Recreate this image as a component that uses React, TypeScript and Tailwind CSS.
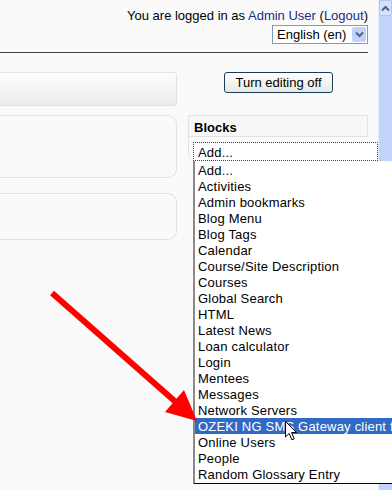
import React from "react";

const BLOCK_OPTIONS = [
  "Add...",
  "Activities",
  "Admin bookmarks",
  "Blog Menu",
  "Blog Tags",
  "Calendar",
  "Course/Site Description",
  "Courses",
  "Global Search",
  "HTML",
  "Latest News",
  "Loan calculator",
  "Login",
  "Mentees",
  "Messages",
  "Network Servers",
  "OZEKI NG SMS Gateway client for Moodle",
  "Online Users",
  "People",
  "Random Glossary Entry",
];

const SELECTED = "OZEKI NG SMS Gateway client for Moodle";

function ChevronDown() {
  return (
    <svg width="9" height="7" viewBox="0 0 9 7">
      <path d="M1 1.5 L4.5 5 L8 1.5" fill="none" stroke="#4d6185" strokeWidth="2" />
    </svg>
  );
}

function ChevronUp() {
  return (
    <svg width="9" height="7" viewBox="0 0 9 7">
      <path d="M1 5.5 L4.5 2 L8 5.5" fill="none" stroke="#4d6185" strokeWidth="2" />
    </svg>
  );
}

export default function App() {
  return (
    <div className="relative flex h-[490px] w-[392px] overflow-hidden bg-[#fafafa] font-['Liberation_Sans',Arial,sans-serif] text-[13px] leading-none text-black">
      {/* Page */}
      <div className="flex-1">
        {/* Header */}
        <div className="flex flex-col items-end pr-[10px] pt-[9px]">
          <p className="h-[14px]">
            You are logged in as <a className="text-[#232a86]">Admin User</a>{" "}
            (<a className="text-[#232a86]">Logout</a>)
          </p>
          <div className="mt-[2px] flex h-[19px] w-[96px] items-center border border-[#7f9db9] bg-white pl-[4px]">
            <span className="flex-1">English (en)</span>
            <span className="mr-[1px] flex h-[15px] w-[14px] items-center justify-center rounded-[2px] bg-[#c1d3fb]">
              <ChevronDown />
            </span>
          </div>
        </div>
        <div className="mr-[10px] mt-[8px] h-px bg-[#444]" />

        {/* Body */}
        <div className="mt-[19px] flex">
          <div className="flex w-[177px] flex-col">
            <div className="h-[34px] rounded-r-[4px] border border-l-0 border-[#e2e2e2] bg-gradient-to-b from-[#fdfdfd] to-[#ececec]" />
            <div className="mt-[9px] h-[63px] rounded-r-[9px] border border-l-0 border-[#e2e2e2]" />
            <div className="mt-[15px] h-[47px] rounded-r-[9px] border border-l-0 border-[#e2e2e2]" />
          </div>

          <div className="ml-[11px] flex w-[180px] flex-col">
            <button className="ml-[36px] h-[21px] w-[109px] rounded-[3px] border border-[#1c3a5a] bg-gradient-to-b from-white to-[#e8e8e3] text-[13px]">
              Turn editing off
            </button>
            <div className="mt-[22px] h-[22px] border border-[#e2e2e2] bg-[#f7f7f7] pl-[5px] pt-[5px] font-bold">
              Blocks
            </div>
            <div className="h-[24px] rounded-bl-[8px] border-l border-[#e2e2e2]" />
          </div>
        </div>
      </div>

      {/* Scrollbar */}
      <div className="flex w-[14px] flex-col border-l border-[#e6eefd] bg-[#c3d4fb]">
        <div className="flex h-[16px] items-center justify-center rounded-[2px] border border-[#b3c6ef] bg-[#d5e2fd]">
          <ChevronUp />
        </div>
      </div>

      {/* Focused select */}
      <div className="absolute left-[193px] top-[142px] h-[19px] w-[185px] border border-dotted border-[#444] bg-white pl-[4px] pt-[3px] tracking-[0.2px]">
        Add...
      </div>

      {/* Open dropdown list */}
      <ul className="absolute left-[193px] top-[161px] w-[210px] border-b border-l-2 border-[#8a8a8a] border-b-black bg-white py-px tracking-[0.2px]">
        {BLOCK_OPTIONS.map((option) => (
          <li
            key={option}
            className={
              "h-[16px] whitespace-nowrap pl-[3px] pt-[2px] " +
              (option === SELECTED ? "bg-[#316ac5] text-white" : "")
            }
          >
            {option}
          </li>
        ))}
      </ul>

      {/* Red arrow annotation */}
      <svg className="absolute left-0 top-0" width="392" height="490" viewBox="0 0 392 490">
        <line x1="52" y1="293" x2="178" y2="404" stroke="#ff0000" strokeWidth="6" />
        <polygon points="197,421 165,412 184,390" fill="#ff0000" />
      </svg>

      {/* Mouse cursor */}
      <svg className="absolute left-[285px] top-[421px]" width="13" height="21" viewBox="0 0 13 21">
        <path
          d="M0.5 0.5 L0.5 16 L4.2 12.4 L6.8 18.8 L9.2 17.8 L6.6 11.5 L11.5 11.5 Z"
          fill="#fff"
          stroke="#000"
          strokeWidth="1"
        />
      </svg>
    </div>
  );
}
